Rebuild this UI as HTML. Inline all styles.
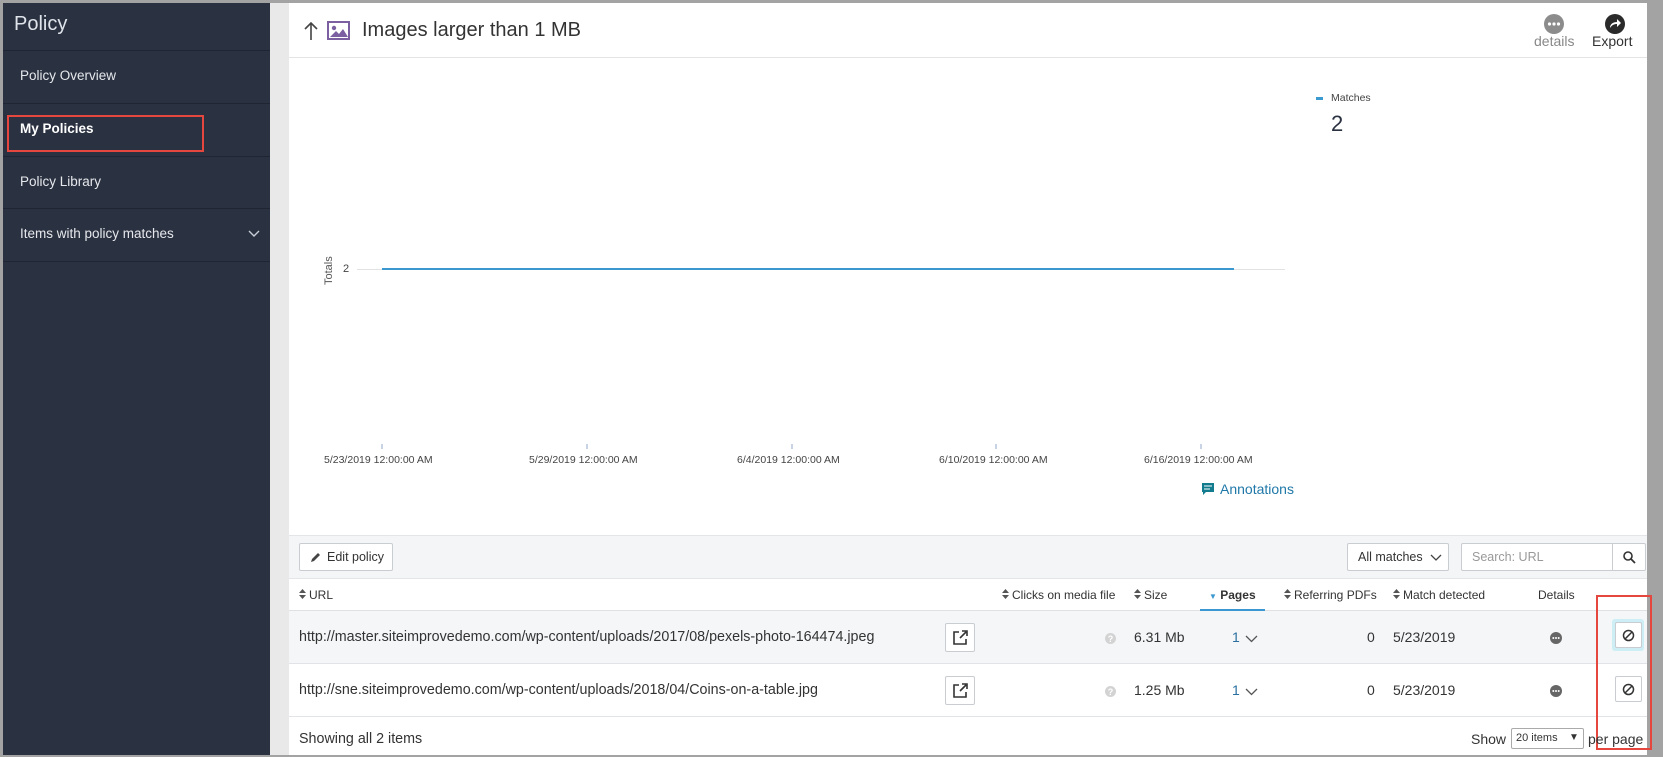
<!DOCTYPE html>
<html><head><meta charset="utf-8"><style>
*{box-sizing:border-box;margin:0;padding:0}
body{width:1663px;height:757px;background:#a3a3a3;font-family:"Liberation Sans",sans-serif;position:relative;overflow:hidden;color:#333}
.a{position:absolute}
#side{left:3px;top:3px;width:267px;height:752px;background:#2a3140}
#gap{left:270px;top:3px;width:19px;height:752px;background:#e9e9ea}
#main{left:289px;top:3px;width:1358px;height:752px;background:#fff}
.nav{position:absolute;left:0;width:267px;color:#e6e8ec;font-size:13.5px;padding-left:17px;border-top:1px solid #1f2532}
.t{font-size:14.3px;color:#333;white-space:nowrap}
.h{font-size:12px;color:#333;white-space:nowrap;position:absolute;top:585px}
.s{display:inline-block;width:7px;height:10px;margin-right:4px;vertical-align:-1px;background:
 linear-gradient(to bottom,transparent,transparent)}
.g{font-size:11px;color:#444;white-space:nowrap}
.btn{position:absolute;border:1px solid #c9ccd1;border-radius:2px;background:#fff}
</style></head><body>
<svg width="0" height="0" style="position:absolute"><defs><symbol id="srt" viewBox="0 0 7 10"><path d="M0 4L3.5 0 7 4zM0 6l3.5 4L7 6z" fill="#555"/></symbol></defs></svg>
<div class="a" id="side">
 <div class="a" style="left:11px;top:10px;font-size:20px;color:#dfe3ea">Policy</div>
 <div class="nav" style="top:47px;height:53px;line-height:50px">Policy Overview</div>
 <div class="nav" style="top:100px;height:53px;line-height:50px;font-weight:bold;color:#fff">My Policies</div>
 <div class="nav" style="top:153px;height:52px;line-height:50px">Policy Library</div>
 <div class="nav" style="top:205px;height:53px;line-height:50px">Items with policy matches
  <svg class="a" style="left:245px;top:21px" width="12" height="8" viewBox="0 0 12 8"><path d="M1 1l5 5 5-5" stroke="#c9ced8" stroke-width="1.4" fill="none"/></svg></div>
 <div class="nav" style="top:258px;height:2px"></div>
 <div class="a" style="left:4px;top:112px;width:197px;height:37px;border:2px solid #e5473e"></div>
</div>
<div class="a" id="gap"></div>
<div class="a" id="main">
 <svg class="a" style="left:15px;top:18px" width="14" height="20" viewBox="0 0 14 20"><path d="M7 19V2M1 8l6-6 6 6" stroke="#444" stroke-width="1.6" fill="none"/></svg>
 <svg class="a" style="left:38px;top:18px" width="23" height="19" viewBox="0 0 23 19"><rect x="1" y="1" width="21" height="17" fill="none" stroke="#7b5fa0" stroke-width="2"/><circle cx="7" cy="7" r="2.2" fill="#7b5fa0"/><path d="M3 16l6-6 3 3 4-5 5 8z" fill="#7b5fa0"/></svg>
 <div class="a" style="left:73px;top:16px;font-size:20px;color:#333">Images larger than 1 MB</div>
 <svg class="a" style="left:1255px;top:11px" width="20" height="20"><circle cx="10" cy="10" r="10" fill="#8c8c8c"/><circle cx="5.5" cy="10" r="1.6" fill="#fff"/><circle cx="10" cy="10" r="1.6" fill="#fff"/><circle cx="14.5" cy="10" r="1.6" fill="#fff"/></svg>
 <div class="a" style="left:1245px;top:30px;font-size:14px;color:#888">details</div>
 <svg class="a" style="left:1316px;top:11px" width="20" height="20"><circle cx="10" cy="10" r="10" fill="#2a2a2a"/><path d="M5 14c0-4 3-6 7-6V5l4 4-4 4v-3c-3 0-5 1-7 4z" fill="#fff"/></svg>
 <div class="a" style="left:1303px;top:30px;font-size:14px;color:#333">Export</div>
 <div class="a" style="left:0;top:54px;width:1358px;height:1px;background:#e4e4e4"></div>
 <div class="a" style="left:1027px;top:94px;width:7px;height:3px;background:#3b9bd1"></div>
 <div class="a g" style="left:1042px;top:89px;font-size:10.5px">Matches</div>
 <div class="a" style="left:1042px;top:108px;font-size:22px;color:#2a3140">2</div>
 <div class="a g" style="left:34px;top:282px;transform:rotate(-90deg);transform-origin:left top;font-size:11px;color:#555">Totals</div>
 <div class="a g" style="left:54px;top:260px">2</div>
 <div class="a" style="left:68px;top:266px;width:928px;height:1px;background:#e2e2e2"></div>
 <div class="a" style="left:93px;top:265px;width:852px;height:2px;background:#3b97cf"></div>
 <div class="a" style="left:92px;top:441px;width:2px;height:5px;background:#c8d3e6"></div>
 <div class="a" style="left:297px;top:441px;width:2px;height:5px;background:#c8d3e6"></div>
 <div class="a" style="left:502px;top:441px;width:2px;height:5px;background:#c8d3e6"></div>
 <div class="a" style="left:706px;top:441px;width:2px;height:5px;background:#c8d3e6"></div>
 <div class="a" style="left:911px;top:441px;width:2px;height:5px;background:#c8d3e6"></div>
 <div class="a g" style="left:35px;top:451px;font-size:10.5px">5/23/2019 12:00:00 AM</div>
 <div class="a g" style="left:240px;top:451px;font-size:10.5px">5/29/2019 12:00:00 AM</div>
 <div class="a g" style="left:448px;top:451px;font-size:10.5px">6/4/2019 12:00:00 AM</div>
 <div class="a g" style="left:650px;top:451px;font-size:10.5px">6/10/2019 12:00:00 AM</div>
 <div class="a g" style="left:855px;top:451px;font-size:10.5px">6/16/2019 12:00:00 AM</div>
 <svg class="a" style="left:913px;top:480px" width="12" height="13"><path d="M0 0h12v9H4l-3 3V9H0z" fill="#137b8e"/><path d="M2 3h8M2 6h6" stroke="#fff"/></svg>
 <div class="a" style="left:931px;top:478px;font-size:14px;color:#1f78a8">Annotations</div>
 <div class="a" style="left:0;top:532px;width:1358px;height:44px;background:#f4f5f7;border-top:1px solid #e3e5e8;border-bottom:1px solid #e3e5e8"></div>
 <div class="btn" style="left:10px;top:540px;width:94px;height:28px"><svg class="a" style="left:10px;top:8px" width="11" height="11"><path d="M1 10l1-3 6-6 2 2-6 6z" fill="#444"/></svg><span class="a" style="left:27px;top:6px;font-size:12.5px">Edit policy</span></div>
 <div class="btn" style="left:1058px;top:540px;width:102px;height:28px"><span class="a" style="left:10px;top:6px;font-size:12.5px">All matches</span><svg class="a" style="left:82px;top:10px" width="12" height="8"><path d="M1 1l5 5 5-5" stroke="#444" stroke-width="1.3" fill="none"/></svg></div>
 <div class="btn" style="left:1172px;top:540px;width:185px;height:28px"><span class="a" style="left:10px;top:6px;font-size:12.5px;color:#999">Search: URL</span><div class="a" style="left:150px;top:0;width:1px;height:26px;background:#c9ccd1"></div><svg class="a" style="left:161px;top:7px" width="13" height="13"><circle cx="5" cy="5" r="4" stroke="#333" stroke-width="1.6" fill="none"/><path d="M8 8l4 4" stroke="#333" stroke-width="1.8"/></svg></div>
 <div class="a" style="left:0;top:576px;width:1358px;height:32px;border-bottom:1px solid #dfe1e4"></div>
 <div class="h" style="left:10px"><svg width="7" height="10" style="margin-right:3px"><use href="#srt"/></svg>URL</div>
 <div class="h" style="left:713px"><svg width="7" height="10" style="margin-right:3px"><use href="#srt"/></svg>Clicks on media file</div>
 <div class="h" style="left:845px"><svg width="7" height="10" style="margin-right:3px"><use href="#srt"/></svg>Size</div>
 <div class="h" style="left:920px;font-weight:bold"><span style="color:#3b97cf;font-size:8px">&#9660;</span> Pages</div>
 <div class="a" style="left:911px;top:606px;width:65px;height:2px;background:#3b97cf"></div>
 <div class="h" style="left:995px"><svg width="7" height="10" style="margin-right:3px"><use href="#srt"/></svg>Referring PDFs</div>
 <div class="h" style="left:1104px"><svg width="7" height="10" style="margin-right:3px"><use href="#srt"/></svg>Match detected</div>
 <div class="h" style="left:1249px">Details</div>
 <div class="a" style="left:0;top:608px;width:1358px;height:53px;background:#f4f6f8;border-bottom:1px solid #e1e3e6"></div>
 <div class="a" style="left:0;top:661px;width:1358px;height:53px;border-bottom:1px solid #e1e3e6"></div>
 <div class="a t" style="left:10px;top:626px">http://master.siteimprovedemo.com/wp-content/uploads/2017/08/pexels-photo-164474.jpeg</div>
 <div class="a t" style="left:10px;top:679px">http://sne.siteimprovedemo.com/wp-content/uploads/2018/04/Coins-on-a-table.jpg</div>
 <div class="btn" style="left:656px;top:620px;width:30px;height:29px"><svg class="a" style="left:7px;top:6px" width="15" height="15"><path d="M6 2H1v12h12V9" stroke="#333" stroke-width="1.6" fill="none"/><path d="M7 8l6-6M9 1h5v5" stroke="#333" stroke-width="1.6" fill="none"/></svg></div>
 <div class="btn" style="left:656px;top:673px;width:30px;height:29px"><svg class="a" style="left:7px;top:6px" width="15" height="15"><path d="M6 2H1v12h12V9" stroke="#333" stroke-width="1.6" fill="none"/><path d="M7 8l6-6M9 1h5v5" stroke="#333" stroke-width="1.6" fill="none"/></svg></div>
 <svg class="a" style="left:816px;top:630px" width="11" height="11"><circle cx="5.5" cy="5.5" r="5.5" fill="#d3d3d3"/><text x="5.5" y="9" font-size="9" font-weight="bold" fill="#fff" text-anchor="middle" font-family="Liberation Sans">?</text></svg>
 <svg class="a" style="left:816px;top:683px" width="11" height="11"><circle cx="5.5" cy="5.5" r="5.5" fill="#d3d3d3"/><text x="5.5" y="9" font-size="9" font-weight="bold" fill="#fff" text-anchor="middle" font-family="Liberation Sans">?</text></svg>
 <div class="a t" style="left:845px;top:626px;font-size:14px">6.31 Mb</div>
 <div class="a t" style="left:845px;top:679px;font-size:14px">1.25 Mb</div>
 <div class="a t" style="left:943px;top:626px;font-size:14px;color:#2a6fa0">1</div>
 <div class="a t" style="left:943px;top:679px;font-size:14px;color:#2a6fa0">1</div>
 <svg class="a" style="left:956px;top:632px" width="13" height="8"><path d="M1 1l5.5 5.5L12 1" stroke="#555" stroke-width="1.3" fill="none"/></svg>
 <svg class="a" style="left:956px;top:685px" width="13" height="8"><path d="M1 1l5.5 5.5L12 1" stroke="#555" stroke-width="1.3" fill="none"/></svg>
 <div class="a t" style="left:1078px;top:626px;font-size:14px">0</div>
 <div class="a t" style="left:1078px;top:679px;font-size:14px">0</div>
 <div class="a t" style="left:1104px;top:626px;font-size:14px">5/23/2019</div>
 <div class="a t" style="left:1104px;top:679px;font-size:14px">5/23/2019</div>
 <svg class="a" style="left:1261px;top:629px" width="12" height="12"><circle cx="6" cy="6" r="6" fill="#666"/><circle cx="3.3" cy="6" r="1" fill="#fff"/><circle cx="6" cy="6" r="1" fill="#fff"/><circle cx="8.7" cy="6" r="1" fill="#fff"/></svg>
 <svg class="a" style="left:1261px;top:682px" width="12" height="12"><circle cx="6" cy="6" r="6" fill="#666"/><circle cx="3.3" cy="6" r="1" fill="#fff"/><circle cx="6" cy="6" r="1" fill="#fff"/><circle cx="8.7" cy="6" r="1" fill="#fff"/></svg>
 <div class="a" style="left:1323px;top:616px;width:32px;height:32px;background:#cdeef5;border-radius:3px"></div>
 <div class="btn" style="left:1326px;top:619px;width:27px;height:26px"><svg class="a" style="left:6px;top:6px" width="13" height="13"><circle cx="6.5" cy="6.5" r="5" stroke="#333" stroke-width="1.5" fill="none"/><path d="M3 10l7-7" stroke="#333" stroke-width="1.5"/></svg></div>
 <div class="btn" style="left:1326px;top:673px;width:27px;height:26px"><svg class="a" style="left:6px;top:6px" width="13" height="13"><circle cx="6.5" cy="6.5" r="5" stroke="#333" stroke-width="1.5" fill="none"/><path d="M3 10l7-7" stroke="#333" stroke-width="1.5"/></svg></div>
 <div class="a" style="left:1307px;top:592px;width:56px;height:155px;border:2px solid #e5473e"></div>
 <div class="a t" style="left:10px;top:728px">Showing all 2 items</div>
 <div class="a t" style="left:1182px;top:728px;font-size:14px">Show</div>
 <div class="btn" style="left:1222px;top:725px;width:73px;height:21px;border-color:#aaa"><span class="a" style="left:4px;top:3px;font-size:11px">20 items</span><span class="a" style="left:57px;top:3px;font-size:10px">&#9660;</span></div>
 <div class="a t" style="left:1299px;top:728px;font-size:14px">per page</div>
</div>
</body></html>
